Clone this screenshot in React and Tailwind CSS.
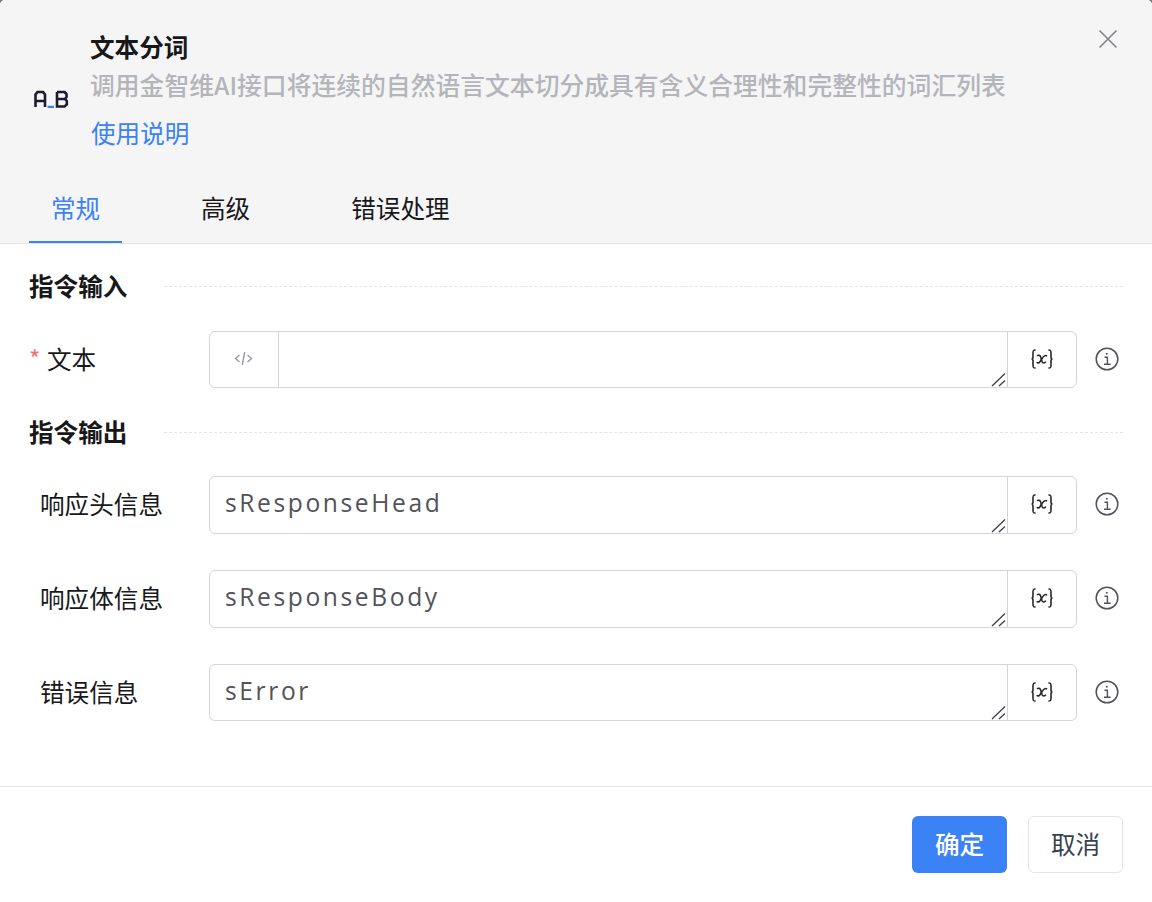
import React from "react";

function Field({ label, required, value, code, h }) {
  return (
    <div className={`flex items-center pl-[29px] pr-[33px] ${h}`}>
      <div className="w-[180px] shrink-0 flex items-center text-[24.6px] leading-[36px] text-[#18181b] -translate-y-[2px]">
        {required ? (
          <><span className="text-[#f87171] w-[18px]">*</span><span>{label}</span></>
        ) : (
          <span className="pl-[11px]">{label}</span>
        )}
      </div>
      <div className="relative w-[869px] h-full flex rounded-[6px] border border-[#d4d4d8] overflow-hidden bg-white">
        {code && (
          <div className="w-[69px] shrink-0 border-r border-[#d4d4d8] flex items-center justify-center pb-[2px]">
            <svg className="-ml-[2px]" width="19" height="15" viewBox="0 0 19 15" fill="none" stroke="#9a9aa3" strokeWidth="1.4">
              <path d="M5.5 4 1.5 7.5 5.5 11M13.5 4 17.5 7.5 13.5 11M10.7 1 8.3 14" />
            </svg>
          </div>
        )}
        <div className="relative flex-1 min-w-0 h-full">
          <textarea
            readOnly
            defaultValue={value}
            className="w-full h-full px-[15px] py-[8px] text-[24.6px] leading-[36px] tracking-[2.6px] text-[#52525b] outline-none resize-none font-['Open_Sans',sans-serif]"
          />
          <svg className="absolute right-[1px] bottom-0 pointer-events-none" width="15" height="15" viewBox="0 0 15 15" fill="none" stroke="#3f3f46" strokeWidth="1.3">
            <path d="M1 14 14 1.5M8 14 14 8.5" />
          </svg>
        </div>
        <div className="w-[69px] shrink-0 border-l border-[#d4d4d8] flex items-center justify-center pb-[2px]">
          <svg width="24" height="22" viewBox="0 0 24 22" fill="none" stroke="#27272a" strokeWidth="1.6" strokeLinecap="round">
            <path d="M5 2C3 2 3 3 3 5V9C3 10.5 2.5 11 1.5 11 2.5 11 3 11.5 3 13V17C3 19 3 20 5 20" />
            <path d="M19 2C21 2 21 3 21 5V9C21 10.5 21.5 11 22.5 11 21.5 11 21 11.5 21 13V17C21 19 21 20 19 20" />
            <path d="M7.5 7.5C9.5 6.8 10.2 7.5 10.8 9.5L12.2 14C12.8 15.2 14 15.2 15.5 14.2" />
            <path d="M16.5 7.8C14.5 6.8 13.2 8.5 11.8 10.8L9.8 14C9 15.2 8.2 15.2 7.2 14.6" />
          </svg>
        </div>
      </div>
      <div className="ml-[18px] -mt-[2px] w-[24px] h-[24px] shrink-0">
        <svg width="24" height="24" viewBox="0 0 24 24" fill="none" stroke="#52525b" strokeWidth="1.5">
          <circle cx="12" cy="12" r="10.8" />
          <path d="M9.5 10.2H12.4V17.2M9 17.2H15.6" strokeWidth="1.4" />
          <circle cx="11.8" cy="6.8" r="1" fill="#52525b" stroke="none" />
        </svg>
      </div>
    </div>
  );
}

function Section({ title }) {
  return (
    <div className="flex items-center pl-[29px] pr-[29px] h-[36px]">
      <div className="w-[135px] shrink-0 text-[24.6px] leading-[36px] font-bold text-[#18181b] -translate-y-[2px]">{title}</div>
      <div className="flex-1 border-t border-dashed border-[#e4e4e7] -translate-y-[1px]" />
    </div>
  );
}

export default function App() {
  return (
    <div className="w-[1152px] h-[902px] bg-[#77777a] overflow-hidden">
      <div className="w-full h-full bg-white flex flex-col rounded-t-[5px] overflow-hidden font-['Noto_Sans_CJK_SC','Noto_Sans',sans-serif]">
        <header className="h-[244px] shrink-0 bg-[#f5f5f6] border-b border-[#e4e4e7] flex flex-col">
          <div className="h-[175px] shrink-0 flex pl-[33px] pr-[34px] pt-[28px]">
            <div className="w-[57px] shrink-0 flex items-start pt-[62px]">
              <svg width="36" height="18" viewBox="0 0 36 18" fill="none" stroke="#1e1b2e" strokeWidth="2.6">
                <path d="M2.5 17V4.5L4.5 2H10L12 4.5V17M2.5 11H12" />
                <path d="M14.5 17H21" stroke="#3b82f6" />
                <path d="M24 2V16.5H31.5L33.8 14.5V11L32 9H24M32 9L33.5 7V4L31.5 2H24" />
              </svg>
            </div>
            <div className="flex-1 min-w-0">
              <div className="text-[24.6px] leading-[36px] font-bold text-[#18181b]">文本分词</div>
              <div className="text-[24.8px] leading-[36px] font-medium text-[#b4b4bb] mt-[2px]">调用金智维AI接口将连续的自然语言文本切分成具有含义合理性和完整性的词汇列表</div>
              <div className="text-[24.6px] leading-[36px] text-[#3b82f6] mt-[12px] ml-[1px]">使用说明</div>
            </div>
            <svg className="shrink-0 mt-[1px]" width="20" height="20" viewBox="0 0 20 20" fill="none" stroke="#85858c" strokeWidth="1.7">
              <path d="M1.5 1.5 18.5 18.5M18.5 1.5 1.5 18.5" />
            </svg>
          </div>
          <nav className="flex pl-[29px] h-[68px] text-[24.6px] leading-[36px] text-[#18181b]">
            <div className="w-[93px] text-center text-[#3b82f6] border-b-[2px] border-[#3b82f6] pt-[14px]">常规</div>
            <div className="ml-[79px] pt-[14px]">高级</div>
            <div className="ml-[101px] pt-[14px]">错误处理</div>
          </nav>
        </header>

        <main className="flex-1 flex flex-col">
          <div className="mt-[25px]"><Section title="指令输入" /></div>
          <div className="mt-[26px]"><Field h="h-[57px]" required label="文本" code value="" /></div>
          <div className="mt-[27px]"><Section title="指令输出" /></div>
          <div className="mt-[25px]"><Field h="h-[58px]" label="响应头信息" value="sResponseHead" /></div>
          <div className="mt-[36px]"><Field h="h-[58px]" label="响应体信息" value="sResponseBody" /></div>
          <div className="mt-[36px]"><Field h="h-[57px]" label="错误信息" value="sError" /></div>
        </main>

        <footer className="h-[116px] shrink-0 border-t border-[#e4e4e7] flex justify-end items-start gap-[21px] pr-[29px] pt-[29px]">
          <button className="w-[95px] h-[57px] pb-[2px] rounded-[6px] bg-[#3b82f6] text-white text-[24.6px] font-medium">确定</button>
          <button className="w-[95px] h-[57px] pb-[2px] rounded-[6px] bg-white border border-[#e4e4e7] text-[#374151] text-[24.6px]">取消</button>
        </footer>
      </div>
    </div>
  );
}
